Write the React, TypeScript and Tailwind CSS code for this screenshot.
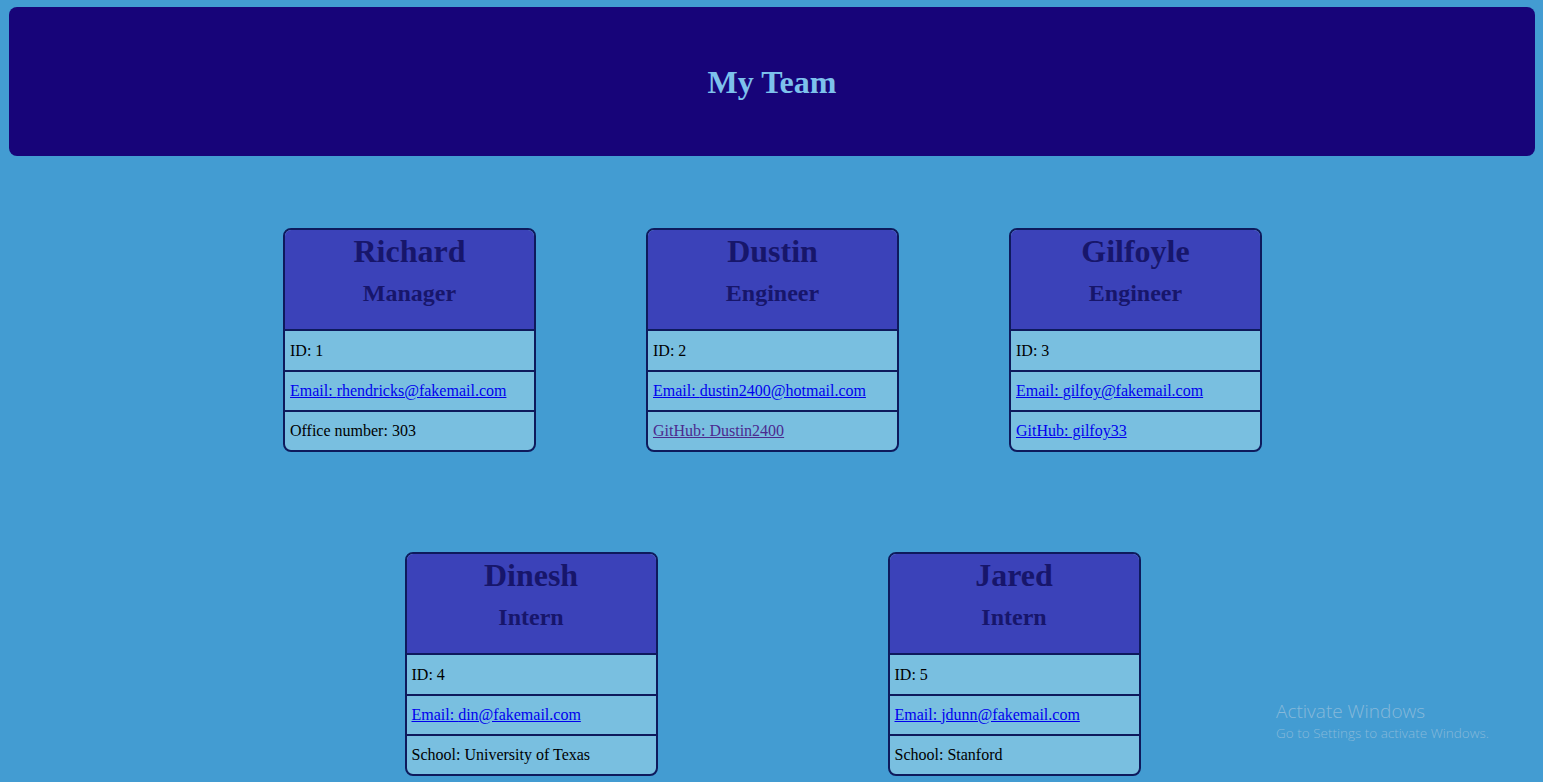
const team = [
  [
    {
      name: "Richard",
      role: "Manager",
      id: 1,
      email: "rhendricks@fakemail.com",
      extra: { text: "Office number: 303" },
    },
    {
      name: "Dustin",
      role: "Engineer",
      id: 2,
      email: "dustin2400@hotmail.com",
      extra: { text: "GitHub: Dustin2400", link: true, visited: true },
    },
    {
      name: "Gilfoyle",
      role: "Engineer",
      id: 3,
      email: "gilfoy@fakemail.com",
      extra: { text: "GitHub: gilfoy33", link: true },
    },
  ],
  [
    {
      name: "Dinesh",
      role: "Intern",
      id: 4,
      email: "din@fakemail.com",
      extra: { text: "School: University of Texas" },
    },
    {
      name: "Jared",
      role: "Intern",
      id: 5,
      email: "jdunn@fakemail.com",
      extra: { text: "School: Stanford" },
    },
  ],
];

type Member = (typeof team)[number][number] & {
  extra: { text: string; link?: boolean; visited?: boolean };
};

function Card({ m }: { m: Member }) {
  return (
    <div className="w-[253px] border-2 border-[#0e1a5c] rounded-[8px] overflow-hidden bg-[#79bfe0]">
      <div className="h-[101px] pt-[3px] bg-[#3b42b9] border-b-2 border-[#0e1a5c] text-center text-[#17166b]">
        <h1 className="text-[32px] leading-[36px] font-bold">{m.name}</h1>
        <h2 className="mt-[10px] text-[24px] leading-[28px] font-bold">{m.role}</h2>
      </div>
      <div className="h-[39px] flex items-center px-[5px] text-[16px] text-black">ID: {m.id}</div>
      <div className="h-[40px] border-t-2 border-[#0e1a5c] flex items-center px-[5px] text-[16px]">
        <a href="#" className="text-[#0000ee] underline">
          Email: {m.email}
        </a>
      </div>
      <div className="h-[40px] border-t-2 border-[#0e1a5c] flex items-center px-[5px] text-[16px]">
        {m.extra.link ? (
          <a
            href="#"
            className={m.extra.visited ? "text-[#4b2a8f] underline" : "text-[#0000ee] underline"}
          >
            {m.extra.text}
          </a>
        ) : (
          <span className="text-black">{m.extra.text}</span>
        )}
      </div>
    </div>
  );
}

export default function App() {
  return (
    <div
      className="relative min-h-[782px] bg-[#439cd2] pt-[7px] overflow-hidden"
      style={{ fontFamily: '"Liberation Serif", "Times New Roman", serif' }}
    >
      {/* Header */}
      <header className="ml-[9px] mr-[8px] h-[149px] rounded-[8px] bg-[#170479] flex items-center justify-center">
        <h1 className="text-[32px] font-bold text-[#7dc1ec]">My Team</h1>
      </header>

      {/* Cards */}
      <div className="mt-[72px] flex flex-col gap-[100px]">
        <div className="flex justify-center gap-[110px] pl-[2px]">
          {team[0].map((m) => (
            <Card key={m.id} m={m as Member} />
          ))}
        </div>
        <div className="flex justify-center gap-[230px] pl-[2px]">
          {team[1].map((m) => (
            <Card key={m.id} m={m as Member} />
          ))}
        </div>
      </div>

      {/* Windows watermark */}
      <div
        className="absolute left-[1276px] top-[700px] text-[#86b9da] leading-tight"
        style={{ fontFamily: '"Open Sans", "Noto Sans", sans-serif' }}
      >
        <div className="text-[19px] font-light">Activate Windows</div>
        <div className="text-[13.5px] font-light mt-[1px]">Go to Settings to activate Windows.</div>
      </div>
    </div>
  );
}
